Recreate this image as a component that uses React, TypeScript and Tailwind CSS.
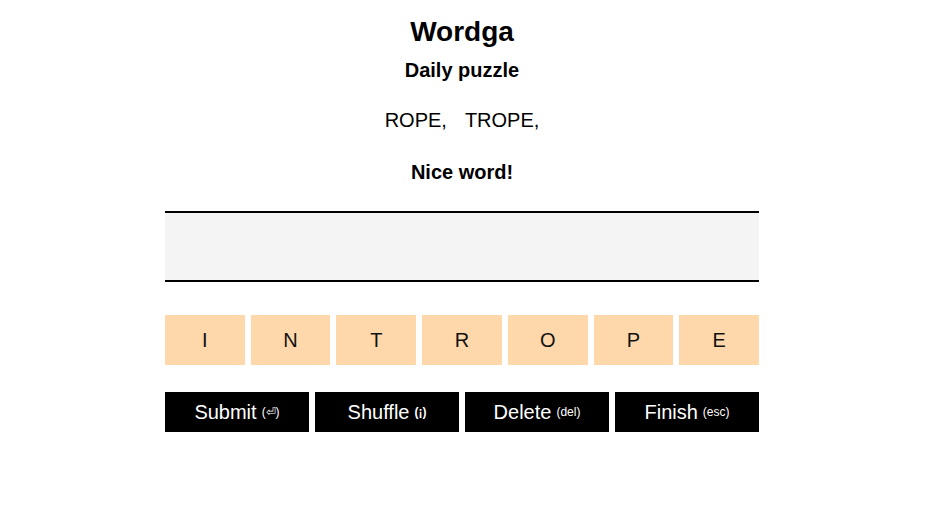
import React from "react";

const letters = ["I", "N", "T", "R", "O", "P", "E"];
const buttons: [string, string][] = [
  ["Submit", "(⏎)"],
  ["Shuffle", "(¡)"],
  ["Delete", "(del)"],
  ["Finish", "(esc)"],
];

export default function App() {
  return (
    <div
      className="w-[928px] h-[522px] bg-white text-black flex justify-center pr-[4px]"
      style={{ fontFamily: '"Liberation Sans", Arial, sans-serif' }}
    >
      <div className="w-[594px] flex flex-col items-center pt-[16px]">
        <h1 className="text-[28px] leading-[32px] font-bold">Wordga</h1>
        <div className="mt-[11px] text-[20px] leading-[23px] font-bold">Daily puzzle</div>
        <div className="mt-[27px] text-[20px] leading-[23px] flex gap-[18px]">
          <span>ROPE,</span>
          <span>TROPE,</span>
        </div>
        <div className="mt-[29px] text-[20px] leading-[23px] font-bold">Nice word!</div>
        <div className="mt-[27px] w-full h-[71px] border-y-2 border-black bg-[#f4f4f4]" />
        <div className="mt-[33px] w-full flex gap-[6px]">
          {letters.map((l, i) => (
            <div
              key={i}
              className="flex-1 h-[50px] bg-[#fed7aa] flex items-center justify-center text-[20px] text-[#111]"
            >
              {l}
            </div>
          ))}
        </div>
        <div className="mt-[27px] w-full flex gap-[6px]">
          {buttons.map(([label, key]) => (
            <div
              key={label}
              className="flex-1 h-[40px] bg-black text-white flex items-center justify-center"
            >
              <span className="text-[20px]">{label}</span>
              <span className={key === "(¡)" ? "text-[12px] ml-[5px] font-bold" : "text-[12px] ml-[5px]"}>{key}</span>
            </div>
          ))}
        </div>
      </div>
    </div>
  );
}
